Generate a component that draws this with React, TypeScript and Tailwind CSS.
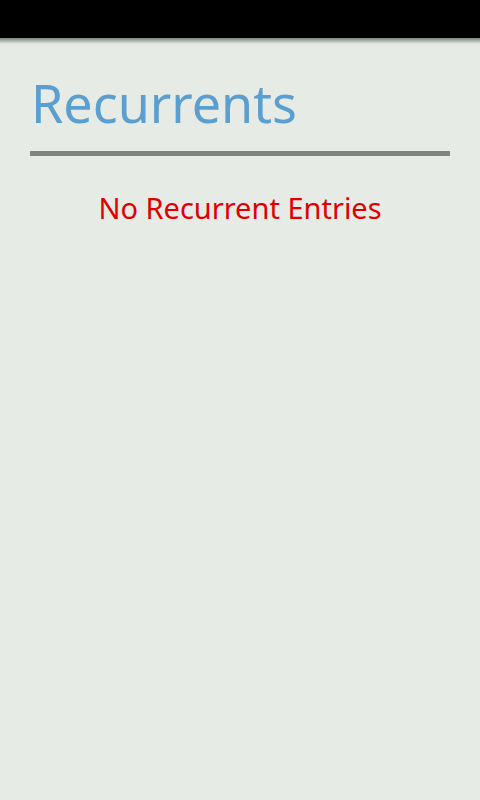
export default function App() {
  return (
    <div className="w-[480px] h-[800px] flex flex-col bg-[#e6ebe6]" style={{ fontFamily: '"Noto Sans", "Open Sans", sans-serif' }}>
      <div className="h-[38px] bg-black shrink-0" />
      <div className="h-[6px] bg-gradient-to-b from-[#7c827c] to-[#e6ebe6] shrink-0" />
      <div className="px-[30px]">
        <h1 className="text-[52px] leading-none text-[#5a9fd0] pl-[1px] pt-[33px] pb-[22px]">Recurrents</h1>
        <div className="h-[5px] bg-[#80857f]" />
        <p className="text-center text-[29px] leading-none text-[#e00000] pt-[37px]">No Recurrent Entries</p>
      </div>
    </div>
  )
}
